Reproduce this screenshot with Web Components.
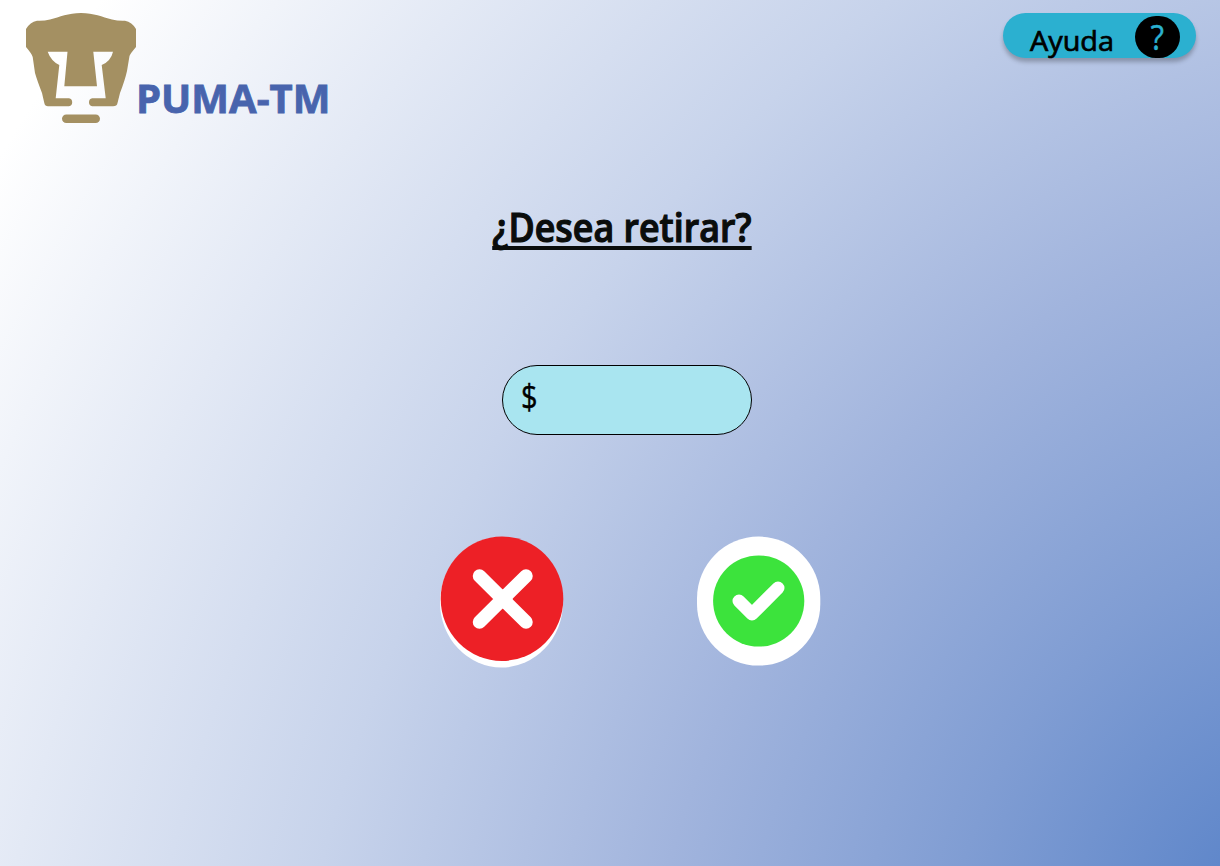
<!DOCTYPE html>
<html lang="es"><head><meta charset="utf-8"><title>PUMA-TM</title>
<style>body{margin:0;background:#fff}</style></head><body>
<atm-screen></atm-screen>
<script>
const define=(name,html)=>customElements.define(name,class extends HTMLElement{
 constructor(){super();this.attachShadow({mode:'open'}).innerHTML=html}});
define('atm-brand',`<style>
:host{display:flex;align-items:flex-start;color:#4864ad;font:700 40px/56px "Open Sans",sans-serif}
svg{display:block;width:110px;height:110px;flex:none}
span{margin-top:57px;width:194px;white-space:nowrap;-webkit-text-stroke:.8px #4864ad}
</style>
<svg viewBox="0 0 110 110" fill="#a49062"><path fill-rule="evenodd" d="M0 34V16Q4 9 11 7.700Q18 8 24 6.500C34 4 42 0 55 0C68 0 76 4 86 6.500Q92 8 99 7.700Q106 9 110 16V34Q104 41 103.500 43L101 58Q99 67 94 80L91.500 90Q91 93.200 87 93.200H66.200A4.100 4.100 0 0 1 66.200 85.200H79.700L75.700 52Q85 48 87 38.700H67.300L71 73.300H38.300L41.500 38.700H21.700Q25 48 33.300 52L29.700 85.200H43A4.100 4.100 0 0 1 43 93.200H22Q19 93.200 18.300 90L16 80Q11 67 9 60L6.700 44Q6 41 0 34Z"/><rect x="36" y="101.400" width="38" height="8.600" rx="4.300"/></svg><span><slot></slot></span>`);
define('help-button',`<style>
:host{display:flex;box-sizing:border-box;width:193px;height:44.500px;border-radius:23px;background:#2bb0d0;box-shadow:0 4px 4px #00000040;padding:3px 16px 0 27px;justify-content:space-between;font:400 28px/38px "Open Sans",sans-serif}
.l{margin-top:5px;-webkit-text-stroke:.7px #000;transform-origin:0 50%;transform:scaleX(1.03)}.q{width:45px;height:41.500px;border-radius:21px;background:#000;color:#2bb0d0;text-align:center;font-size:34px;line-height:42px;-webkit-text-stroke:.4px #2bb0d0}.q i{display:inline-block;font-style:normal;transform:scaleX(.92)}
</style><span class="l"><slot></slot></span><span class="q"><i>?</i></span>`);
define('amount-field',`<style>
:host{display:block;box-sizing:border-box;width:250px;height:70px;border:1px solid #000;border-radius:35px;background:#a9e5f0;padding:7px 18px;font:400 35px/46px "Open Sans",sans-serif}
span{display:inline-block;transform-origin:0 50%;transform:scaleX(.83);-webkit-text-stroke:.4px #000}
</style><span><slot></slot></span>`);
define('cancel-button',`<style>:host{display:block}svg{display:block}</style>
<svg width="124" height="132" viewBox="0 0 124 132"><ellipse cx="61.500" cy="66.200" rx="61.500" ry="65.300" fill="#fff"/><ellipse cx="62" cy="62.700" rx="61.300" ry="62.200" fill="#ed2026"/><path d="M39.500 40L86 86M86 40L39.500 86" stroke="#fff" stroke-width="13.500" stroke-linecap="round"/><path d="M53 63L62.500 53.500L73 63L62.500 72.500Z" fill="#fff"/></svg>`);
define('accept-button',`<style>:host{display:block}svg{display:block}</style>
<svg width="124" height="130" viewBox="0 0 124 130"><rect y=".6" width="123.300" height="129" rx="61.600" fill="#fff"/><circle cx="61.700" cy="65" r="45.600" fill="#3ce33c"/><path d="M42 65L55 78L81 52" fill="none" stroke="#fff" stroke-width="13" stroke-linecap="round" stroke-linejoin="round"/></svg>`);
define('atm-screen',`<style>
:host{display:block;position:relative;isolation:isolate;box-sizing:border-box;width:1220px;height:866px;overflow:hidden}
.bg{position:absolute;inset:0;z-index:-1;display:block}
header{display:flex;justify-content:space-between;align-items:flex-start;height:190px;box-sizing:border-box;padding:13px 24px 0 26px}
main{display:flex;flex-direction:column;align-items:center}
h1{margin:7px 0 0 24px;color:#0a0d0c;font:600 40px/60px "Open Sans",sans-serif;-webkit-text-stroke:1.200px #0a0d0c;text-decoration:underline 4px;text-decoration-skip-ink:none;text-underline-offset:4px;height:60px;transform:scaleX(.895)}
amount-field{margin:108px 0 0 33px}
nav{display:flex;gap:133px;margin:101px 0 0 40px}
</style>
<svg class="bg" width="1220" height="866"><defs><radialGradient id="sky" gradientUnits="userSpaceOnUse" cx="0" cy="0" r="1" gradientTransform="translate(1250 890) rotate(31) scale(1450 1950)"><stop offset="0" stop-color="#5b84c9"/><stop offset=".19" stop-color="#809dd3"/><stop offset=".38" stop-color="#a1b4dd"/><stop offset=".605" stop-color="#c7d3eb"/><stop offset="1" stop-color="#fff"/></radialGradient></defs><rect width="1220" height="866" fill="url(#sky)"/></svg>
<header><atm-brand>PUMA-TM</atm-brand><help-button>Ayuda</help-button></header>
<main><h1>¿Desea retirar?</h1><amount-field>$</amount-field><nav><cancel-button></cancel-button><accept-button></accept-button></nav></main>`);
</script></body></html>
